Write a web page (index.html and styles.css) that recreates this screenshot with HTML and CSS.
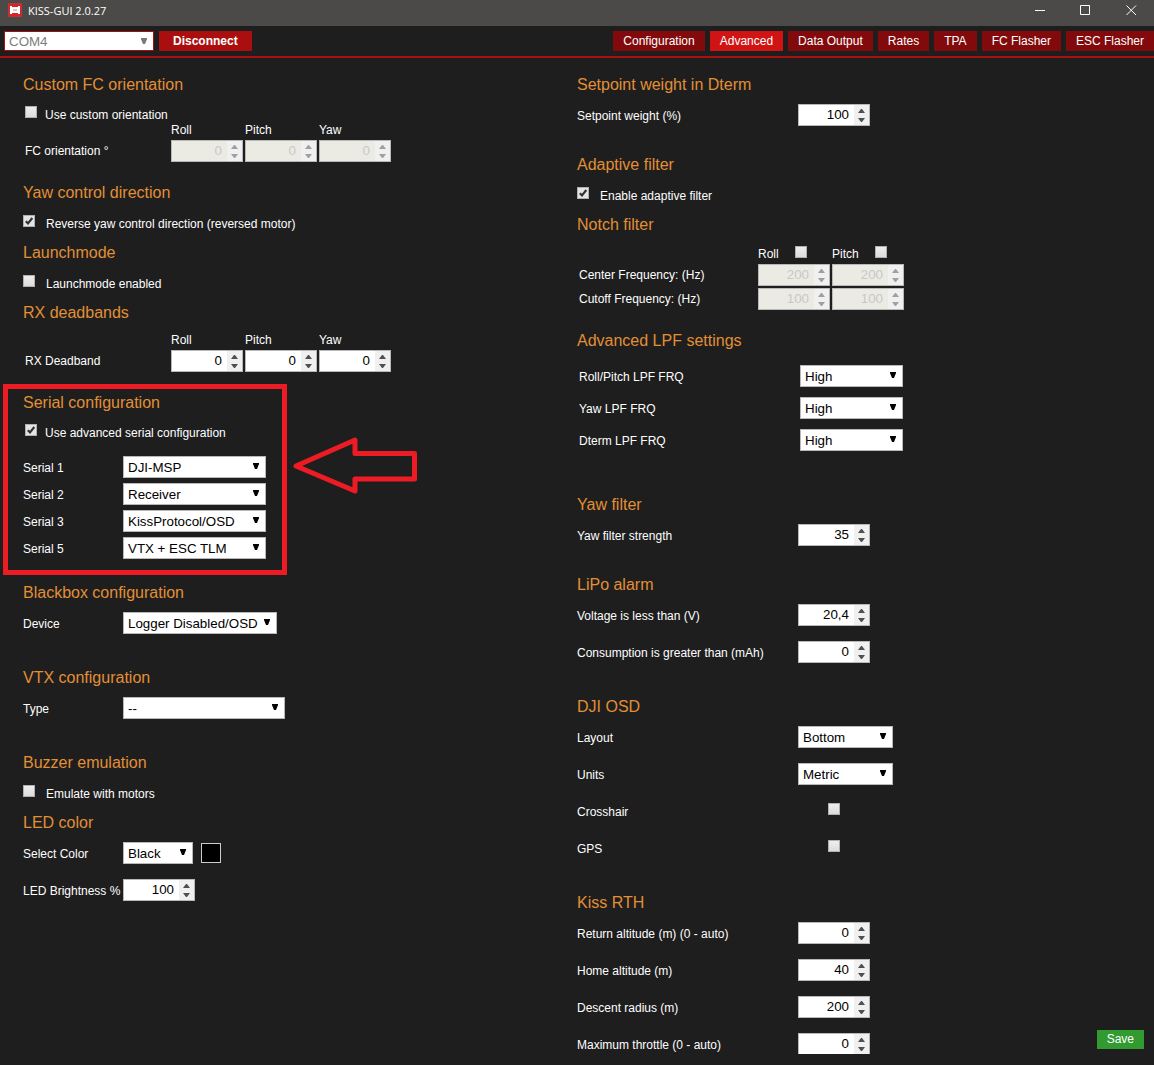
FILE: index.html
```html
<!DOCTYPE html>
<html lang="en">
<head>
<meta charset="utf-8">
<title>KISS-GUI 2.0.27</title>
<link rel="stylesheet" href="styles.css">
</head>
<body>
<header class="titlebar">
  <svg class="app-icon" width="14" height="14" viewBox="0 0 14 14" aria-hidden="true">
    <rect x="0.5" y="0.5" width="13" height="13" fill="#d5252b" stroke="#b8353a"/>
    <path d="M2 3h2v1h6V3h2v8h-2v-1H4v1H2z" fill="#fff"/>
    <rect x="5" y="6" width="4" height="2" fill="#e3c4c6"/>
  </svg>
  <span class="app-title">KISS-GUI 2.0.27</span>
  <div class="window-buttons">
    <button class="window-button" type="button" aria-label="Minimize"><svg width="11" height="11" viewBox="0 0 11 11"><path d="M1 5.500h10" stroke="#fff" fill="none"/></svg></button>
    <button class="window-button" type="button" aria-label="Maximize"><svg width="11" height="11" viewBox="0 0 11 11"><path d="M0.500 0.500h9v9h-9z" stroke="#fff" fill="none"/></svg></button>
    <button class="window-button" type="button" aria-label="Close"><svg width="11" height="11" viewBox="0 0 11 11"><path d="M0.500 0.500l9.500 9.500M10 0.500l-9.500 9.500" stroke="#fff" fill="none"/></svg></button>
  </div>
</header>

<div class="toolbar">
  <select class="select port-select" aria-label="Port" disabled><option>COM4</option></select>
  <button class="connect-button" type="button">Disconnect</button>
  <nav class="tabs">
    <a class="tab" href="#configuration">Configuration</a>
    <a class="tab tab-active" href="#advanced">Advanced</a>
    <a class="tab" href="#data-output">Data Output</a>
    <a class="tab" href="#rates">Rates</a>
    <a class="tab" href="#tpa">TPA</a>
    <a class="tab" href="#fc-flasher">FC Flasher</a>
    <a class="tab" href="#esc-flasher">ESC Flasher</a>
  </nav>
</div>

<main class="content">
  <div class="column">
    <section class="section section-table">
      <h2>Custom FC orientation</h2>
      <label class="check check-compact"><input class="checkbox" type="checkbox">Use custom orientation</label>
      <table class="axes">
        <thead><tr><td></td><th>Roll</th><th>Pitch</th><th>Yaw</th></tr></thead>
        <tbody><tr>
          <th class="axis-label">FC orientation °</th>
          <td><input class="number" type="number" value="0" aria-label="FC orientation roll" disabled></td>
          <td><input class="number" type="number" value="0" aria-label="FC orientation pitch" disabled></td>
          <td><input class="number" type="number" value="0" aria-label="FC orientation yaw" disabled></td>
        </tr></tbody>
      </table>
    </section>

    <section class="section section-check">
      <h2>Yaw control direction</h2>
      <label class="check"><input class="checkbox" type="checkbox" checked>Reverse yaw control direction (reversed motor)</label>
    </section>

    <section class="section section-check">
      <h2>Launchmode</h2>
      <label class="check"><input class="checkbox" type="checkbox">Launchmode enabled</label>
    </section>

    <section class="section section-table">
      <h2>RX deadbands</h2>
      <table class="axes">
        <thead><tr><td></td><th>Roll</th><th>Pitch</th><th>Yaw</th></tr></thead>
        <tbody><tr>
          <th class="axis-label">RX Deadband</th>
          <td><input class="number" type="number" value="0" aria-label="RX deadband roll"></td>
          <td><input class="number" type="number" value="0" aria-label="RX deadband pitch"></td>
          <td><input class="number" type="number" value="0" aria-label="RX deadband yaw"></td>
        </tr></tbody>
      </table>
    </section>

    <section class="section section-serial">
      <h2>Serial configuration</h2>
      <label class="check check-compact"><input class="checkbox" type="checkbox" checked>Use advanced serial configuration</label>
      <div class="rows rows-serial">
        <div class="row"><label for="serial1">Serial 1</label><select class="select select-serial" id="serial1"><option>DJI-MSP</option></select></div>
        <div class="row"><label for="serial2">Serial 2</label><select class="select select-serial" id="serial2"><option>Receiver</option></select></div>
        <div class="row"><label for="serial3">Serial 3</label><select class="select select-serial" id="serial3"><option>KissProtocol/OSD</option></select></div>
        <div class="row"><label for="serial5">Serial 5</label><select class="select select-serial" id="serial5"><option>VTX + ESC TLM</option></select></div>
      </div>
      <div class="highlight"></div>
      <svg class="arrow" width="130" height="60" viewBox="0 0 130 60" aria-hidden="true">
        <path d="M4 30L63 4V17.500H122.500V43H63V55Z" fill="none" stroke="#ed1c24" stroke-width="5" stroke-linejoin="round"/>
      </svg>
    </section>

    <section class="section section-wide">
      <h2>Blackbox configuration</h2>
      <div class="row"><label for="device">Device</label><select class="select select-device" id="device"><option>Logger Disabled/OSD</option></select></div>
    </section>

    <section class="section section-wide">
      <h2>VTX configuration</h2>
      <div class="row"><label for="vtx">Type</label><select class="select select-vtx" id="vtx"><option>--</option></select></div>
    </section>

    <section class="section section-check">
      <h2>Buzzer emulation</h2>
      <label class="check"><input class="checkbox" type="checkbox">Emulate with motors</label>
    </section>

    <section class="section">
      <h2>LED color</h2>
      <div class="rows">
        <div class="row"><label for="led">Select Color</label><select class="select select-color" id="led"><option>Black</option></select><span class="swatch"></span></div>
        <div class="row"><label for="brightness">LED Brightness %</label><input class="number" type="number" id="brightness" value="100"></div>
      </div>
    </section>
  </div>

  <div class="column column-right">
    <section class="section">
      <h2>Setpoint weight in Dterm</h2>
      <div class="row"><label for="setpoint">Setpoint weight (%)</label><input class="number" type="number" id="setpoint" value="100"></div>
    </section>

    <section class="section section-check">
      <h2>Adaptive filter</h2>
      <label class="check"><input class="checkbox" type="checkbox" checked>Enable adaptive filter</label>
    </section>

    <section class="section section-table">
      <h2>Notch filter</h2>
      <table class="axes axes-notch">
        <thead><tr>
          <td></td>
          <th><label class="axis-toggle">Roll <input class="checkbox" type="checkbox"></label></th>
          <th><label class="axis-toggle">Pitch <input class="checkbox" type="checkbox"></label></th>
        </tr></thead>
        <tbody>
          <tr>
            <th class="axis-label">Center Frequency: (Hz)</th>
            <td><input class="number" type="number" value="200" aria-label="Center frequency roll" disabled></td>
            <td><input class="number" type="number" value="200" aria-label="Center frequency pitch" disabled></td>
          </tr>
          <tr>
            <th class="axis-label">Cutoff Frequency: (Hz)</th>
            <td><input class="number" type="number" value="100" aria-label="Cutoff frequency roll" disabled></td>
            <td><input class="number" type="number" value="100" aria-label="Cutoff frequency pitch" disabled></td>
          </tr>
        </tbody>
      </table>
    </section>

    <section class="section section-lpf">
      <h2>Advanced LPF settings</h2>
      <div class="rows rows-lpf">
        <div class="row"><label for="lpf-rp">Roll/Pitch LPF FRQ</label><select class="select select-lpf" id="lpf-rp"><option>High</option></select></div>
        <div class="row"><label for="lpf-yaw">Yaw LPF FRQ</label><select class="select select-lpf" id="lpf-yaw"><option>High</option></select></div>
        <div class="row"><label for="lpf-dterm">Dterm LPF FRQ</label><select class="select select-lpf" id="lpf-dterm"><option>High</option></select></div>
      </div>
    </section>

    <section class="section">
      <h2>Yaw filter</h2>
      <div class="row"><label for="yaw-filter">Yaw filter strength</label><input class="number" type="number" id="yaw-filter" value="35"></div>
    </section>

    <section class="section section-wide">
      <h2>LiPo alarm</h2>
      <div class="rows">
        <div class="row"><label for="voltage">Voltage is less than (V)</label><input class="number" type="text" inputmode="decimal" id="voltage" value="20,4"></div>
        <div class="row"><label for="consumption">Consumption is greater than (mAh)</label><input class="number" type="number" id="consumption" value="0"></div>
      </div>
    </section>

    <section class="section section-wide">
      <h2>DJI OSD</h2>
      <div class="rows">
        <div class="row"><label for="osd-layout">Layout</label><select class="select select-osd" id="osd-layout"><option>Bottom</option></select></div>
        <div class="row"><label for="osd-units">Units</label><select class="select select-osd" id="osd-units"><option>Metric</option></select></div>
        <div class="row"><label for="crosshair">Crosshair</label><span class="check-cell"><input class="checkbox" type="checkbox" id="crosshair"></span></div>
        <div class="row"><label for="gps">GPS</label><span class="check-cell"><input class="checkbox" type="checkbox" id="gps"></span></div>
      </div>
    </section>

    <section class="section">
      <h2>Kiss RTH</h2>
      <div class="rows">
        <div class="row"><label for="return-alt">Return altitude (m) (0 - auto)</label><input class="number" type="number" id="return-alt" value="0"></div>
        <div class="row"><label for="home-alt">Home altitude (m)</label><input class="number" type="number" id="home-alt" value="40"></div>
        <div class="row"><label for="descent">Descent radius (m)</label><input class="number" type="number" id="descent" value="200"></div>
        <div class="row"><label for="throttle">Maximum throttle (0 - auto)</label><input class="number" type="number" id="throttle" value="0"></div>
      </div>
    </section>
  </div>
</main>
<button class="save-button" type="button">Save</button>
</body>
</html>
```

FILE: styles.css
```css
* {
  box-sizing: border-box;
}

body {
  display: flex;
  flex-direction: column;
  height: 100vh;
  margin: 0;
  padding-bottom: 11px;
  overflow: hidden;
  background: #1e1e1e;
  color: #fff;
  font-family: "Liberation Sans", Arial, sans-serif;
  font-size: 12px;
}

button,
input,
select {
  margin: 0;
  font-family: inherit;
}

/* Window title bar */
.titlebar {
  display: flex;
  flex: none;
  align-items: flex-start;
  height: 26px;
  background: #4b4a48;
}

.app-icon {
  margin: 3px 6px 0 8px;
}

.app-title {
  font-family: "Open Sans", "Noto Sans", sans-serif;
  font-size: 11px;
  line-height: 22px;
}

.window-buttons {
  display: flex;
  margin-left: auto;
}

.window-button {
  display: flex;
  align-items: center;
  justify-content: center;
  width: 46px;
  height: 20px;
  padding: 0;
  border: 0;
  background: none;
}

/* Toolbar */
.toolbar {
  display: flex;
  flex: none;
  gap: 5px;
  height: 32px;
  padding: 5px 0 5px 4px;
  border-bottom: 2px solid #ab0e0e;
}

.connect-button {
  height: 20px;
  padding: 0 14px;
  border: 0;
  background: #ab0e0e;
  color: #fff;
  font-size: 12px;
  font-weight: bold;
}

.tabs {
  display: flex;
  gap: 5px;
  margin-left: auto;
}

.tab {
  height: 20px;
  padding: 0 10px;
  background: #820a0c;
  color: #fff;
  line-height: 20px;
  text-decoration: none;
  white-space: nowrap;
}

.tab-active {
  background: #d01414;
}

/* Settings columns */
.content {
  display: grid;
  flex: 1;
  grid-template-columns: 1fr 1fr;
  min-height: 0;
  padding-top: 16px;
  overflow: hidden;
}

.column {
  padding-left: 23px;
}

.column-right {
  padding-left: 0;
}

.section {
  position: relative;
  margin-bottom: 28px;
}

.section-check {
  margin-bottom: 8px;
}

.section-table {
  margin-bottom: 18px;
}

.section-serial {
  margin-bottom: 23px;
}

.section-wide {
  margin-bottom: 33px;
}

.section-lpf {
  margin-bottom: 43px;
}

h2 {
  margin: 0 0 8px;
  color: #e28f36;
  font-size: 16px;
  font-weight: normal;
  line-height: 22px;
}

.rows {
  display: grid;
  gap: 15px;
}

.rows-serial {
  gap: 5px;
  margin-top: 16px;
}

.rows-lpf {
  gap: 10px;
  padding: 5px 0 0 2px;
}

.row {
  display: flex;
  align-items: center;
  height: 22px;
}

.row > label {
  flex: none;
  width: 100px;
  padding-top: 2px;
  white-space: nowrap;
}

.column-right .row > label {
  width: 221px;
}

.check {
  display: flex;
  gap: 11px;
  height: 22px;
  line-height: 24px;
}

.check .checkbox {
  margin-top: 3px;
}

.check-compact {
  gap: 8px;
  height: 18px;
  padding-left: 2px;
  line-height: 22px;
}

.check-compact .checkbox {
  margin-top: 2px;
}

.check-cell {
  display: flex;
  justify-content: center;
  width: 72px;
  height: 16px;
}

/* Axis tables */
.axes {
  border-collapse: collapse;
}

.axes th,
.axes td {
  padding: 0 2px 2px 0;
  font-weight: normal;
  line-height: 16px;
  text-align: left;
}

.axes .axis-label {
  width: 148px;
  padding-left: 2px;
}

.axes-notch .axis-label {
  width: 181px;
}

.axis-toggle {
  display: flex;
  gap: 16px;
  height: 18px;
  line-height: 20px;
}

.axis-toggle .checkbox {
  margin-top: 2px;
}

/* Controls */
.checkbox {
  flex: none;
  width: 12px;
  height: 12px;
  border: 1px solid #b0b0b0;
  background: linear-gradient(#eee, #dcdcdc);
  appearance: none;
}

.checkbox:checked {
  background: url("data:image/svg+xml,%3Csvg xmlns='http://www.w3.org/2000/svg' width='10' height='10'%3E%3Cpath d='M1.800 5.200L4 7.400L8.300 2' fill='none' stroke='%23333' stroke-width='2.200'/%3E%3C/svg%3E") #e4e4e4;
}

.select {
  height: 22px;
  padding: 0 4px;
  border: 1px solid #b8b8b8;
  border-radius: 0;
  background: url("data:image/svg+xml,%3Csvg xmlns='http://www.w3.org/2000/svg' width='6' height='6'%3E%3Cpath d='M0 0H6V1L4 6H2L0 1Z'/%3E%3C/svg%3E") no-repeat right 6px top 6px #fff;
  color: #000;
  appearance: none;
}

.port-select {
  width: 150px;
  height: 20px;
  border-color: #ab0e0e;
  background-image: url("data:image/svg+xml,%3Csvg xmlns='http://www.w3.org/2000/svg' width='6' height='6'%3E%3Cpath d='M0 0H6V1L4 6H2L0 1Z' fill='%23777'/%3E%3C/svg%3E");
  color: #7c7c7c;
  opacity: 1;
}

.select-serial {
  width: 143px;
}

.select-device {
  width: 154px;
}

.select-vtx {
  width: 162px;
}

.select-color {
  width: 70px;
}

.select-lpf {
  width: 103px;
}

.select-osd {
  width: 95px;
}

.number {
  display: block;
  width: 72px;
  height: 22px;
  padding: 0 20px 2px 2px;
  border: 1px solid #b8b8b8;
  border-radius: 0;
  background: url("data:image/svg+xml,%3Csvg xmlns='http://www.w3.org/2000/svg' width='15' height='20'%3E%3Cpath d='M0 0H15V20H0Z' fill='%23f0f0f0'/%3E%3Cpath d='M4 8L7 4H8L11 8ZM4 13L7 17H8L11 13Z' fill='%23505050'/%3E%3C/svg%3E") no-repeat right top #fff;
  color: #000;
  text-align: right;
  appearance: textfield;
}

.number:disabled {
  background-color: #ebebe4;
  background-image: url("data:image/svg+xml,%3Csvg xmlns='http://www.w3.org/2000/svg' width='15' height='20'%3E%3Cpath d='M0 0H15V20H0Z' fill='%23f0f0f0'/%3E%3Cpath d='M4 8L7 4H8L11 8ZM4 13L7 17H8L11 13Z' fill='%23a0a0a0'/%3E%3C/svg%3E");
  color: #c8c8c8;
}

.number::-webkit-inner-spin-button {
  margin: 0;
  appearance: none;
}

.swatch {
  width: 20px;
  height: 20px;
  margin-left: 8px;
  border: 1px solid #ccc;
  background: #000;
}

.save-button {
  position: fixed;
  right: 10px;
  bottom: 16px;
  height: 19px;
  padding: 0 10px 2px;
  border: 0;
  background: #319a31;
  color: #fff;
  font-size: 12px;
}

/* Callout over the serial settings */
.highlight {
  position: absolute;
  top: -8px;
  left: -20px;
  width: 284px;
  height: 191px;
  border: 5px solid #ed1c24;
  pointer-events: none;
}

.arrow {
  position: absolute;
  top: 44px;
  left: 269px;
}
```
